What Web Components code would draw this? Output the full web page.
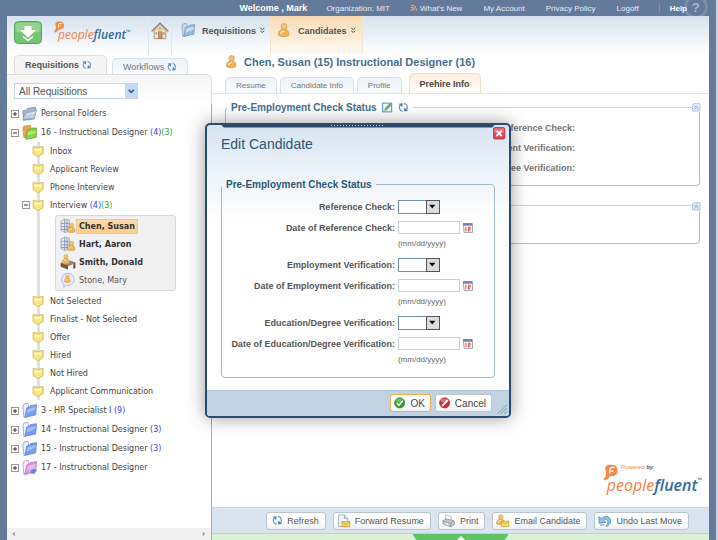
<!DOCTYPE html>
<html lang="en">
<head>
<meta charset="utf-8">
<title>Edit Candidate</title>
<style>
  html, body { height: 100%; margin: 0; }
  body { background: #647a9b; font-family: "Liberation Sans", Arial, sans-serif; font-size: 9px; color: #555; }
</style>
</head>
<body>
<recruit-app></recruit-app>
<script>
const define = (name, html, setup) => {
  const tpl = document.createElement('template');
  tpl.innerHTML = html;
  customElements.define(name, class extends HTMLElement {
    constructor() {
      super();
      this.attachShadow({ mode: 'open' }).append(tpl.content.cloneNode(true));
    }
    connectedCallback() {
      if (setup && !this.ready) { this.ready = true; setup(this, this.shadowRoot); }
    }
  });
};

const folder = (light, mid, dark, back) => `<path d="M1 4L2 1 6 0 7 2 7 14 2 15Z" fill="${back}" stroke="${dark}" stroke-width=".6"/><path d="M3 15L5 5 8 4 9 2.500 15.500 1.500 14.500 12.500Z" fill="${mid}" stroke="${dark}" stroke-width=".7"/><path d="M5 11L6.200 6 14.500 4 14 7Z" fill="${light}" opacity=".75"/>`;
const person = (x, y, s) => `<g transform="translate(${x} ${y}) scale(${s})"><path d="M1 14C0 10 2 8 5 7.500L5 6 9 6 9 7.500C12 8 13 11 12 14 9 15.500 4 15.500 1 14Z" fill="#eeb45c" stroke="#c98a35" stroke-width=".7"/><circle cx="7" cy="3.800" r="3.300" fill="#f4c579" stroke="#c98a35" stroke-width=".7"/><path d="M3 12C4 9.500 5 9 8 9" stroke="#fbe3b8" stroke-width="1.500" fill="none"/></g>`;
const swirl = `<g fill="none" stroke="#6a9dcb" stroke-width="2"><path d="M7 14.200A6.200 6.200 0 0 1 3.200 4.500"/><path d="M9.500 1.800A6.200 6.200 0 0 1 13.300 11.500"/></g><path d="M1 2.500L7.300 1.800 6.500 8Z M15.500 13.500L9.200 14.200 10 8Z" fill="#4c84bb"/>`;
const grid = `<path d="M1 3L5 1 10 2 10 14 5 15 1 13Z" fill="#e4eaf3" stroke="#8d9bb1" stroke-width=".7"/><path d="M1 6L5 5 10 6M1 9L5 9 10 9.500M1 12L5 12 10 12M5 1L5 15M7.500 2L7.500 14" stroke="#8092ad" stroke-width=".9" fill="none"/>`;
const mark = `<path d="M2 14C4.500 12 4.500 8 3.500 5.500 2 3 5 0 9 .5 14 .3 16.500 4 15.500 8 14.600 11 11 12.500 8 11.800 7 14 5 16 3 16 1.500 16 1 15 2 14Z" fill="#f58a4b"/><path d="M12.500 3.300C9 2.600 7.300 4 7.800 7L7.500 9.500M7.500 6.800H11.500" fill="none" stroke="#fff" stroke-width="1.200"/>`;
const ICONS = {
  down: `<rect x=".5" y=".5" width="27" height="22" rx="4" fill="#70c472" stroke="#57a35c" /><rect x="1.500" y="1.500" width="25" height="10" rx="3" fill="#9bdb96" opacity=".75"/><path d="M10.500 5H17.500V9H22L14 17 6 9H10.500Z" fill="#fff"/><path d="M9 15.500L14 19.500 19 15.500" fill="none" stroke="#fff" stroke-width="1.500"/>`,
  home: `<path d="M3 8V15.500H14V8L8.500 3Z" fill="#f8e6c4" stroke="#a38a68" stroke-width=".8"/><path d="M.7 8.500L8.500 1 16.300 8.500" fill="none" stroke="#8b7b70" stroke-width="1.300"/><path d="M3 8L8.500 2.500 14 8Z" fill="#f3d3a3"/><rect x="7" y="9" width="3.500" height="6.500" fill="#c99a68" stroke="#94704c" stroke-width=".6"/><path d="M4.200 9.500h1.800v2h-1.800zM11.300 9.500h1.800v2h-1.800z" fill="#88a4c4"/><circle cx="8.500" cy="6" r="1.100" fill="#9aa9c0"/>`,
  navfolder: folder('#dce8f6', '#9cb8d8', '#6e8eb4', '#c5d6e9'),
  gray: `<path d="M1 5L5 4 6 2.500 14 1 15 3 13 13.500 1.500 15Z" fill="#a4b5cd" stroke="#71859f" stroke-width=".8"/><path d="M1 14L4 7 15.500 4.500 13 13Z" fill="#c1cee0" stroke="#8497b1" stroke-width=".6"/><path d="M5 9L14 6.500" stroke="#e7eef6"/>`,
  green: `<path d="M1 3L2 1 9 0 9 12 2 13Z" fill="#f2a24c" stroke="#cb7e36" stroke-width=".7"/><path d="M4 15L5.500 5 9 4.500 10 3 15.500 3 15 13Z" fill="#86d83e" stroke="#5aa32a" stroke-width=".8"/><path d="M6 11L7 7 14.500 6 14.500 8Z" fill="#bcf083" opacity=".8"/>`,
  blue: folder('#b3c8ff', '#7a9df0', '#5a78cf', '#eef2fb'),
  pink: folder('#f4c6ee', '#dd97db', '#ad68b4', '#fbf0fb') + `<path d="M8 14L9 10 14 8 16 11 13 15Z" fill="#6f7fe0" stroke="#fff" stroke-width=".6"/>`,
  stage: `<path d="M1.500 1.500L8 3 14.500 1.500V11L8 15 1.500 11Z" fill="#f8e57d" stroke="#cfb54f" stroke-width="1.100"/><path d="M3.500 4L8 5 12.500 4V8L8 7.500 3.500 8Z" fill="#fdf6b9"/>`,
  person: person(1, 0, 1),
  gridperson: grid + person(7.500, 5, .68),
  desk: `<path d="M1 10L9 7 16 9 8 12.500Z" fill="#a98a5a" stroke="#5b4a36" stroke-width=".6"/><path d="M1 10V13L8 15.800V12.500ZM8 12.500V15.800M16 9V14.500L14.500 15V10.500" fill="#6c5a45" stroke="#54442f" stroke-width=".6"/>` + person(1.500, 0, .68),
  bubble: `<path d="M8 1A7 6.500 0 1 1 7 13.900L4 16 4 13A6.800 6.800 0 0 1 8 1Z" fill="#e8e8fb" stroke="#b0b2de" stroke-width=".9"/>` + person(4.200, 2.500, .55),
  refresh: swirl,
  edit: `<rect x="1" y="1.500" width="14" height="13.500" fill="#f4f9ff" stroke="#4d8cc8" stroke-width="1.500"/><path d="M4 13L5 9 12 2 14.500 4.500 8 11.500Z" fill="#67b95a" stroke="#47934a" stroke-width=".6"/>`,
  collapse: `<path d="M1 5Q1 1 5 1H15V15H1Z" fill="#e6eff8" stroke="#94b3d0" stroke-width="1.300"/><path d="M4 9L8 5 12 9M4 12.500L8 8.500 12 12.500" fill="none" stroke="#7fa4c8" stroke-width="1.500"/>`,
  rss: `<g fill="none" stroke="#f0a874" stroke-width="2.300"><path d="M2 7A7 7 0 0 1 9 14M2 2A12 12 0 0 1 14 14"/></g><circle cx="3.500" cy="12.500" r="1.900" fill="#f0a874"/>`,
  mark,
  calendar: `<path d="M2 2H14.500L15 14.500H3Z" fill="#fff" stroke="#8a8cc0" stroke-width="1.200"/><path d="M1.500 1.500H14.500V5H1.500Z" fill="#7e7fae"/><path d="M5.500 6.500V12.500M8.200 7.200H11.500V9.500H9V12.200H12" fill="none" stroke="#e4572e" stroke-width="1.500"/>`,
  ok: `<circle cx="8" cy="8" r="7.300" fill="#2f9a35" stroke="#1f7527" stroke-width=".8"/><ellipse cx="7.500" cy="4.800" rx="5" ry="3" fill="#7fcf78" opacity=".7"/><path d="M4 8.500L7 11.500 12.500 5" fill="none" stroke="#fff" stroke-width="2.400"/>`,
  cancel: `<circle cx="8" cy="8" r="7.300" fill="#cf2a34" stroke="#a51d28" stroke-width=".8"/><ellipse cx="7" cy="4.800" rx="4.500" ry="3" fill="#f08a8a" opacity=".7"/><path d="M4.500 12.500L12.500 4" stroke="#fff" stroke-width="2.600"/>`,
  close: `<rect x=".5" y=".5" width="15" height="15" rx="2" fill="#da4752" stroke="#a92c3a"/><rect x="1.500" y="1.500" width="13" height="6" fill="#f08d90" opacity=".6"/><path d="M4.500 4.500L11.500 11.500M11.500 4.500L4.500 11.500" stroke="#fff" stroke-width="2.500"/>`,
  forward: `<path d="M2 .8H9L13 5V15H2Z" fill="#f3f7fd" stroke="#8fa6c6"/><path d="M9 1V5H13" fill="#cfdcec" stroke="#8fa6c6"/><rect x="6" y="9" width="9.500" height="6.300" fill="#f6d964" stroke="#c59f34" stroke-width=".9"/><path d="M6 9L10.700 12.500 15.500 9" fill="none" stroke="#c59f34" stroke-width=".9"/>`,
  print: `<path d="M4 1L11 2.500 11.500 8 4.500 7Z" fill="#fff" stroke="#a0a6ae" stroke-width=".8"/><path d="M1 8L5 5.500 14.500 8 15.500 12 10.500 15.200 1.500 12Z" fill="#c3c8cf" stroke="#868c95" stroke-width=".9"/><path d="M1 8L10.500 11 14.500 8M10.500 11V15" fill="none" stroke="#868c95" stroke-width=".8"/><path d="M4 11L8 12.500" stroke="#fff" stroke-width="1.300"/>`,
  email: person(0, 0, .85) + `<rect x="7" y="8.500" width="8.500" height="6.500" fill="#fbe07a" stroke="#c59f34" stroke-width=".9"/><path d="M7 8.500L11.200 12 15.500 8.500" fill="none" stroke="#c59f34" stroke-width=".9"/>`,
  undo: `<path d="M1 3L1.500 11 9.500 10 7 7.800C9.500 5.200 12.300 6.500 12 10 11.800 12 10.800 13.500 9.500 15 13.500 13.800 15.800 10.500 15.300 7 14.500 2.500 8.500 1 4.300 5.200Z" fill="#8fc0ea" stroke="#4283bd" stroke-width=".9"/><path d="M2.500 13.500L7.500 12.800" stroke="#5e9bd0" stroke-width="1.200"/>`,
  more: `<path d="M3 2L8 6 13 2M3 9L8 13 13 9" fill="none" stroke="#555" stroke-width="2.400"/>`,
  grip: `<path d="M1 15L15 1M6 15L15 6M11 15L15 11" stroke="#7d9dbf" stroke-width="1.500"/>`,
  drop: `<path d="M2 5H14L8 12Z" fill="#111"/>`,
  chevron: `<path d="M3 5L8 10 13 5" fill="none" stroke="#3d5a86" stroke-width="3"/>`,
  left: `<path d="M10 3L5 8 10 13Z" fill="#999"/>`,
  right: `<path d="M6 3L11 8 6 13Z" fill="#999"/>`,
};
define('app-icon', `<style>:host{display:inline-block;flex:none;width:var(--w,14px);height:var(--h,var(--w,14px))}svg{display:block;width:100%;height:100%}</style>`,
  (el, root) => {
    const n = el.getAttribute('name');
    root.innerHTML += `<svg viewBox="${n === 'down' ? '0 0 28 23' : '0 0 17 16.500'}" aria-hidden="true">${ICONS[n]}</svg>`;
  });

define('brand-logo', `<style>
  :host{display:inline-grid;grid-template-columns:auto 1fr}
  .mark{--w:var(--mark,12px);grid-row:1}
  small{grid-row:1;grid-column:2;font:italic 6px/7px "Liberation Sans",sans-serif;color:#f58a4b;align-self:start;justify-self:start;padding-left:2px}
  small b{color:#3673a8}
  .name{grid-column:1/3;font:italic var(--size,12px)/1 "Open Sans",sans-serif;color:#f08148;white-space:nowrap;margin-top:var(--lift,-4px);padding-left:5px}
  .name b{font-weight:600;color:#2f6da4} sup{font-size:6px;line-height:1;color:#2f6da4;vertical-align:top}
</style><app-icon class="mark" name="mark"></app-icon><span class="name">people<b>fluent</b><sup>™</sup></span>`,
  (el, root) => { if (el.hasAttribute('powered')) root.querySelector('.mark').insertAdjacentHTML('afterend', '<small>Powered <b>by</b></small>'); });

define('top-bar', `<style>
  :host{display:flex;justify-content:flex-end;align-items:center;height:16px;padding-right:29px;font-size:8px;color:#e6ebf3;white-space:nowrap;position:relative;z-index:0;overflow:hidden}
  a{color:inherit;text-decoration:none;margin-left:21px}
  b{font-size:9px;color:#fff}
  b+a{margin-left:19px}
  .rss{display:flex;align-items:center;gap:2px;--w:8px;margin-left:20px}
  .sep{width:1px;height:10px;background:#8193ae;margin-left:20px}
  .help{margin-left:10px;font-weight:bold;color:#fff;position:relative}
  .ring{position:absolute;left:14px;top:-9px;width:18px;height:18px;border:3px solid #7b8dab;border-radius:50%;font:bold 13px/20px "Liberation Sans",sans-serif;text-align:center;color:#a8b5ca;z-index:-1}
</style>
<b>Welcome , Mark</b><a href="#">Organization: MIT</a><a class="rss" href="#"><app-icon name="rss"></app-icon>What's New</a><a href="#">My Account</a><a href="#">Privacy Policy</a><a href="#">Logoff</a><span class="sep"></span><a class="help" href="#">Help<span class="ring">?</span></a>`);

define('main-nav', `<style>
  :host{display:flex;height:38px;background:linear-gradient(#d5e2ee,#fff);align-items:stretch;box-sizing:border-box;padding-left:7px}
  button{border:0;background:none;padding:0;--w:28px;--h:23px;align-self:flex-start;margin-top:5px}
  brand-logo{margin:5px 12px 0 11px;align-self:flex-start;width:83px}
  a{display:flex;align-items:center;color:#555;font-weight:bold;text-decoration:none;box-sizing:border-box;padding-bottom:9px}
  .home{--w:18px;padding-left:2px;padding-right:2px;border-left:1px solid #dfe7ef;border-right:1px solid #dfe7ef}
  .req{--w:15px;gap:6px;padding:0 4px 9px 9px}
  .cand{--w:15px;gap:6px;padding:0 5px 9px 6px;background:linear-gradient(#f8dab3,#fffaf3);border-left:1px solid #f3e3cf;border-right:1px solid #f3e3cf}
  .more{--w:7px;margin-left:-3px}
</style>
<button aria-label="Show menu"><app-icon name="down"></app-icon></button><brand-logo></brand-logo>
<a class="home" href="#" aria-label="Home"><app-icon name="home"></app-icon></a>
<a class="req" href="#"><app-icon name="navfolder"></app-icon>Requisitions<app-icon class="more" name="more"></app-icon></a>
<a class="cand" href="#"><app-icon name="person"></app-icon>Candidates<app-icon class="more" name="more"></app-icon></a>`);

define('tab-item', `<style>
  :host{display:block;flex:none}
  button{display:flex;align-items:center;gap:3px;height:16px;border:1px solid #d8e0e8;border-bottom:0;border-radius:5px 5px 0 0;background:linear-gradient(#edf3f9,#f8fafc);font:8px "Liberation Sans",Arial,sans-serif;color:#777;padding:0 10px;--w:10px;white-space:nowrap}
  :host([size=m]) button{font-size:9px}
  :host([active]) button{height:20px;font-size:9px;font-weight:bold;color:#444;border-color:#f0e0cc;background:linear-gradient(#fdeedd,#fff)}
  :host([active=plain]) button{height:19px;border-color:#ddd;background:#f5f5f5;color:#555;padding:0 14px 0 10px}
</style><button role="tab"><slot></slot></button>`);

define('tree-row', `<style>
  :host{display:flex;align-items:center;height:19px;padding-left:4px;font:8px "DejaVu Sans",Verdana,sans-serif;color:#444;white-space:nowrap;--w:16px}
  :host([stage]){height:18px;padding-left:15px;--w:13px}
  .toggle{width:8px;height:8px;padding:0;border:1px solid #9a9a9a;background:#fff;display:grid;place-items:center;flex:none;margin-right:3px}
  :host([stage]) .toggle{margin-right:2px}
  .toggle svg{width:6px;height:6px;display:block}
  .toggle.none{visibility:hidden}
  a{color:inherit;text-decoration:none;margin-left:3px}
  :host([stage]) a{margin-left:5px}
  .b{color:#4242e8}.g{color:#28a828}
</style><button class="toggle"></button><app-icon></app-icon><a href="#"><slot></slot> <span class="b"></span><span class="g"></span></a>`,
  (el, root) => {
    const t = el.getAttribute('toggle'), b = root.querySelector('.toggle'), i = document.createElement('app-icon');
    i.setAttribute('name', el.getAttribute('icon') || 'stage');
    root.querySelector('app-icon').replaceWith(i);
    if (!t) b.classList.add('none');
    else { b.setAttribute('aria-label', t === 'plus' ? 'Expand' : 'Collapse'); b.innerHTML = `<svg viewBox="0 0 6 6"><path d="${t === 'plus' ? 'M3 1V5' : ''}M1 3H5" stroke="#333"/></svg>`; }
    root.querySelector('.b').textContent = el.getAttribute('blue') || '';
    root.querySelector('.g').textContent = el.getAttribute('green') || '';
  });

define('candidate-row', `<style>
  :host{display:flex;align-items:center;height:18px;font:bold 8px "DejaVu Sans",Verdana,sans-serif;color:#333;padding-left:4px;--w:16px;white-space:nowrap}
  :host([light]){font-weight:normal;color:#555}
  a{color:inherit;text-decoration:none;padding:2px;border:1px solid transparent}
  :host([selected]) a{background:linear-gradient(#fbd9ac,#fccb8c);border-color:#ecc694}
</style><app-icon></app-icon><a href="#"><slot></slot></a>`,
  (el, root) => {
    const i = document.createElement('app-icon'); i.setAttribute('name', el.getAttribute('icon'));
    root.querySelector('app-icon').replaceWith(i);
  });

define('side-panel', `<style>
  :host{display:flex;flex-direction:column;flex:none;width:205px;box-sizing:border-box;min-height:0}
  .tabs{display:flex;gap:5px;align-items:flex-end;height:20px;padding-left:7px}
  .filter{height:30px;box-sizing:border-box;border-top:1px solid #ddd;border-right:1px solid #ddd;border-top-right-radius:6px;background:linear-gradient(#f5f5f5,#fff);padding:8px 0 0 7px}
  .combo{display:grid;width:124px}
  .combo>*{grid-area:1/1}
  select{appearance:none;height:16px;border:1px solid #c4d5ea;background:#fff;font:10px "Liberation Sans",Arial,sans-serif;color:#555;padding:0 16px 0 4px;border-radius:0}
  .arrow{justify-self:end;width:12px;height:14px;margin:1px;background:#c4d9f7;display:grid;place-items:center;--w:9px;pointer-events:none}
  .tree{flex:1;border-right:1px solid #79cc86;min-height:0;overflow:hidden}
  .stages{background:linear-gradient(#e2e0de,#e2e0de) 30px 0/3px 100% no-repeat;margin-bottom:1px}
  .people{margin:1px 35px 1px 48px;border:1px solid #d8d8d8;border-radius:3px;background:#f1f1f1;padding:1px 0}
  .scroll{display:flex;justify-content:space-between;align-items:center;height:12px;background:#f1f1f1;border-right:1px solid #79cc86;--w:8px;padding:0 3px}
</style>
<div class="tabs" role="tablist"><tab-item active="plain">Requisitions<app-icon name="refresh"></app-icon></tab-item><tab-item size="m">Workflows<app-icon name="refresh"></app-icon></tab-item></div>
<div class="filter"><div class="combo"><select aria-label="Requisition filter"><option>All Requisitions</option></select><span class="arrow"><app-icon name="chevron"></app-icon></span></div></div>
<div class="tree">
<tree-row toggle="plus" icon="gray">Personal Folders</tree-row>
<tree-row toggle="minus" icon="green" blue="(4)" green="(3)">16 - Instructional Designer</tree-row>
<div class="stages">
<tree-row stage>Inbox</tree-row><tree-row stage>Applicant Review</tree-row><tree-row stage>Phone Interview</tree-row>
<tree-row stage toggle="minus" blue="(4)" green="(3)">Interview</tree-row>
<div class="people"><candidate-row selected icon="gridperson">Chen, Susan</candidate-row><candidate-row icon="gridperson">Hart, Aaron</candidate-row><candidate-row icon="desk">Smith, Donald</candidate-row><candidate-row light icon="bubble">Stone, Mary</candidate-row></div>
<tree-row stage>Not Selected</tree-row><tree-row stage>Finalist - Not Selected</tree-row><tree-row stage>Offer</tree-row><tree-row stage>Hired</tree-row><tree-row stage>Not Hired</tree-row><tree-row stage>Applicant Communication</tree-row>
</div>
<tree-row toggle="plus" icon="blue" blue="(9)">3 - HR Specialist I</tree-row>
<tree-row toggle="plus" icon="blue" blue="(3)">14 - Instructional Designer</tree-row>
<tree-row toggle="plus" icon="blue" blue="(3)">15 - Instructional Designer</tree-row>
<tree-row toggle="plus" icon="pink">17 - Instructional Designer</tree-row>
</div>
<div class="scroll"><app-icon name="left"></app-icon><app-icon name="right"></app-icon></div>`);

define('section-box', `<style>
  :host{display:block;position:relative}
  fieldset{margin:0;padding:0;border:1px solid #a9c3d6;border-top-color:#c8d5e0;border-radius:4px;min-width:0}
  legend{display:flex;align-items:center;gap:5px;height:12px;padding:0 4px;margin-left:1px;font-size:10px;font-weight:bold;color:#44708f;white-space:nowrap;--w:11px}
  :host([dialog]) fieldset{border-color:#9dbace}
  :host([dialog]) legend{color:#2b5876;margin-left:0}
  :host([untitled]) legend{display:none}
  button{position:absolute;right:-1px;top:2px;border:0;padding:0;background:#fff;display:flex;--w:9px}
  :host([untitled]) button{top:-3px}
  :host([dialog]) button{display:none}
</style><fieldset><legend><slot name="title"></slot></legend><slot></slot></fieldset><button aria-label="Collapse section"><app-icon name="collapse"></app-icon></button>`);

define('push-button', `<style>
  :host{display:block;flex:none}
  button{display:flex;align-items:center;gap:4px;height:18px;box-sizing:border-box;border:1px solid #bcc4cd;border-radius:3px;background:linear-gradient(#fff 50%,#f0f1f3);font:9px "Liberation Sans",Arial,sans-serif;color:#555;padding:0 6px 0 3px;--w:14px;white-space:nowrap}
  :host([small]) button{--w:11px;padding:0 6px 0 5px}
  :host([dialog]) button{font-size:10px;--w:12px;color:#444;padding:0 5px 0 3px}
  :host([primary]) button{border-color:#f0ae52}
</style><button><slot></slot></button>`);

define('candidate-view', `<style>
  :host{display:flex;flex-direction:column;flex:1;min-width:0}
  h1{display:flex;align-items:center;gap:5px;margin:0 0 4px;height:15px;padding-left:13px;font-size:11px;color:#44708f;white-space:nowrap;--w:14px}
  .tabs{display:flex;align-items:flex-end;gap:3px;padding-left:13px;border-bottom:1px solid #e6e6e6;height:20px}
  .tabs :last-child{margin-left:4px}
  .content{flex:1;padding:7px 9px 0 13px;display:flex;flex-direction:column;gap:19px}
  .list{padding:5px 124px 7px 0;text-align:right;font-weight:bold;color:#777;line-height:20px}
  .empty{height:37px}
  .brand{margin-top:auto;align-self:flex-end;margin-bottom:14px;--mark:17px;--size:16px;--lift:-4px;margin-right:-2px}
  .actions{display:flex;justify-content:flex-end;align-items:center;gap:7px;height:26px;box-sizing:border-box;padding-right:20px;background:#d9e4f0;border-top:1px solid #c9d5e1}
  .drawer{height:7px;background:#daf1d5;border-top:1px solid #b4dfb2;box-sizing:border-box;display:flex;justify-content:center}
  .drawer button{width:96px;border:0;padding:0;background:#5fc267;clip-path:polygon(0 0,100% 0,96% 100%,4% 100%);display:flex;justify-content:center}
  .drawer i{border:4px solid transparent;border-top:0;border-bottom:4px solid #fff}
</style>
<h1><app-icon name="person"></app-icon>Chen, Susan (15) Instructional Designer (16)</h1>
<div class="tabs" role="tablist"><tab-item>Resume</tab-item><tab-item>Candidate Info</tab-item><tab-item>Profile</tab-item><tab-item active>Prehire Info</tab-item></div>
<div class="content">
<section-box><span slot="title">Pre-Employment Check Status</span><app-icon slot="title" name="edit"></app-icon><app-icon slot="title" name="refresh"></app-icon>
<div class="list"><div>Reference Check:</div><div>Employment Verification:</div><div>Education/Degree Verification:</div></div></section-box>
<section-box untitled><div class="empty"></div></section-box>
<brand-logo class="brand" powered></brand-logo>
</div>
<div class="actions"><push-button small><app-icon name="refresh"></app-icon>Refresh</push-button><push-button><app-icon name="forward"></app-icon>Forward Resume</push-button><push-button><app-icon name="print"></app-icon>Print</push-button><push-button><app-icon name="email"></app-icon>Email Candidate</push-button><push-button><app-icon name="undo"></app-icon>Undo Last Move</push-button></div>
<div class="drawer"><button aria-label="Open drawer"><i></i></button></div>`);

define('choice-field', `<style>
  :host{display:grid;grid-template-columns:9fr 5fr;gap:3px;align-items:center;height:22px}
  label{text-align:right;font-weight:bold;color:#555;white-space:nowrap}
  .box{display:grid;width:42px}.box>*{grid-area:1/1}
  select{appearance:none;height:14px;border:1px solid #6f8fae;background:#fff;border-radius:0;padding:0 14px 0 2px;font:9px "Liberation Sans",Arial,sans-serif}
  .arrow{justify-self:end;width:12px;height:12px;border:1px solid #555;background:#dcdcdc;display:grid;place-items:center;--w:9px;pointer-events:none}
</style><label for="f"><slot></slot></label><div class="box"><select id="f"><option></option></select><span class="arrow"><app-icon name="drop"></app-icon></span></div>`);

define('date-field', `<style>
  :host{display:grid;grid-template-columns:9fr 5fr;column-gap:3px;grid-template-rows:20px 12px;align-items:center;margin-bottom:4px}
  label{text-align:right;font-weight:bold;color:#555;white-space:nowrap}
  .line{display:flex;align-items:center;gap:2px}
  input{width:62px;height:13px;box-sizing:border-box;border:1px solid #cdcfe0;padding:0 2px;background:#fff;font:9px "Liberation Sans",Arial,sans-serif}
  button{display:flex;border:0;background:none;padding:0;--w:12px}
  small{grid-column:2;font-size:8px;color:#666}
</style><label for="d"><slot></slot></label><div class="line"><input id="d" type="text"><button aria-label="Pick a date"><app-icon name="calendar"></app-icon></button></div><small>(mm/dd/yyyy)</small>`);

define('edit-dialog', `<style>
  :host{display:flex;flex-direction:column;width:306px;box-sizing:border-box;border:2px solid #2a4a70;border-radius:5px;background:linear-gradient(#d6e3f1,#eef4fa 50px,#fff 95px);box-shadow:0 0 18px rgba(0,0,0,.4);overflow:hidden;position:relative}
  .bar{height:3px;margin:0 14px;background:#2a4a70;clip-path:polygon(0 0,100% 0,99% 100%,1% 100%);display:flex;justify-content:center}
  .bar i{width:54px;height:1px;background:repeating-linear-gradient(90deg,#b8c8da 0 1px,transparent 1px 3px)}
  .close{position:absolute;right:3px;top:2px;border:0;padding:0;background:none;--w:13px}
  h2{margin:7px 0 0 14px;font-size:14px;line-height:18px;font-weight:normal;color:#2b5876}
  section-box{margin:26px 14px 0}
  .rows{padding:5px 0 7px}
  footer{display:flex;justify-content:flex-end;gap:4px;align-items:center;height:26px;margin-top:12px;padding-right:17px;background:#c2d2e3;border-top:1px solid #b3c6d9;box-sizing:border-box}
  .grip{position:absolute;right:1px;bottom:1px;--w:11px}
</style>
<div class="bar"><i></i></div><button class="close" aria-label="Close"><app-icon name="close"></app-icon></button>
<h2>Edit Candidate</h2>
<section-box dialog><span slot="title">Pre-Employment Check Status</span><div class="rows">
<choice-field>Reference Check:</choice-field><date-field>Date of Reference Check:</date-field>
<choice-field>Employment Verification:</choice-field><date-field>Date of Employment Verification:</date-field>
<choice-field>Education/Degree Verification:</choice-field><date-field>Date of Education/Degree Verification:</date-field>
</div></section-box>
<footer><push-button dialog primary><app-icon name="ok"></app-icon>OK</push-button><push-button dialog><app-icon name="cancel"></app-icon>Cancel</push-button></footer>
<app-icon class="grip" name="grip"></app-icon>`);

define('recruit-app', `<style>
  :host{display:flex;flex-direction:column;min-height:100vh;box-sizing:border-box;border-right:2px solid #cbd1dc;position:relative}
  .page{flex:1;display:flex;flex-direction:column;margin:0 7px;background:#fff}
  .body{flex:1;display:flex}
  .overlay{position:absolute;inset:0;display:grid;place-items:center}
</style>
<top-bar></top-bar><div class="page"><main-nav></main-nav><div class="body"><side-panel></side-panel><candidate-view></candidate-view></div></div>
<div class="overlay"><edit-dialog role="dialog" aria-label="Edit Candidate"></edit-dialog></div>`);
</script>
</body>
</html>
